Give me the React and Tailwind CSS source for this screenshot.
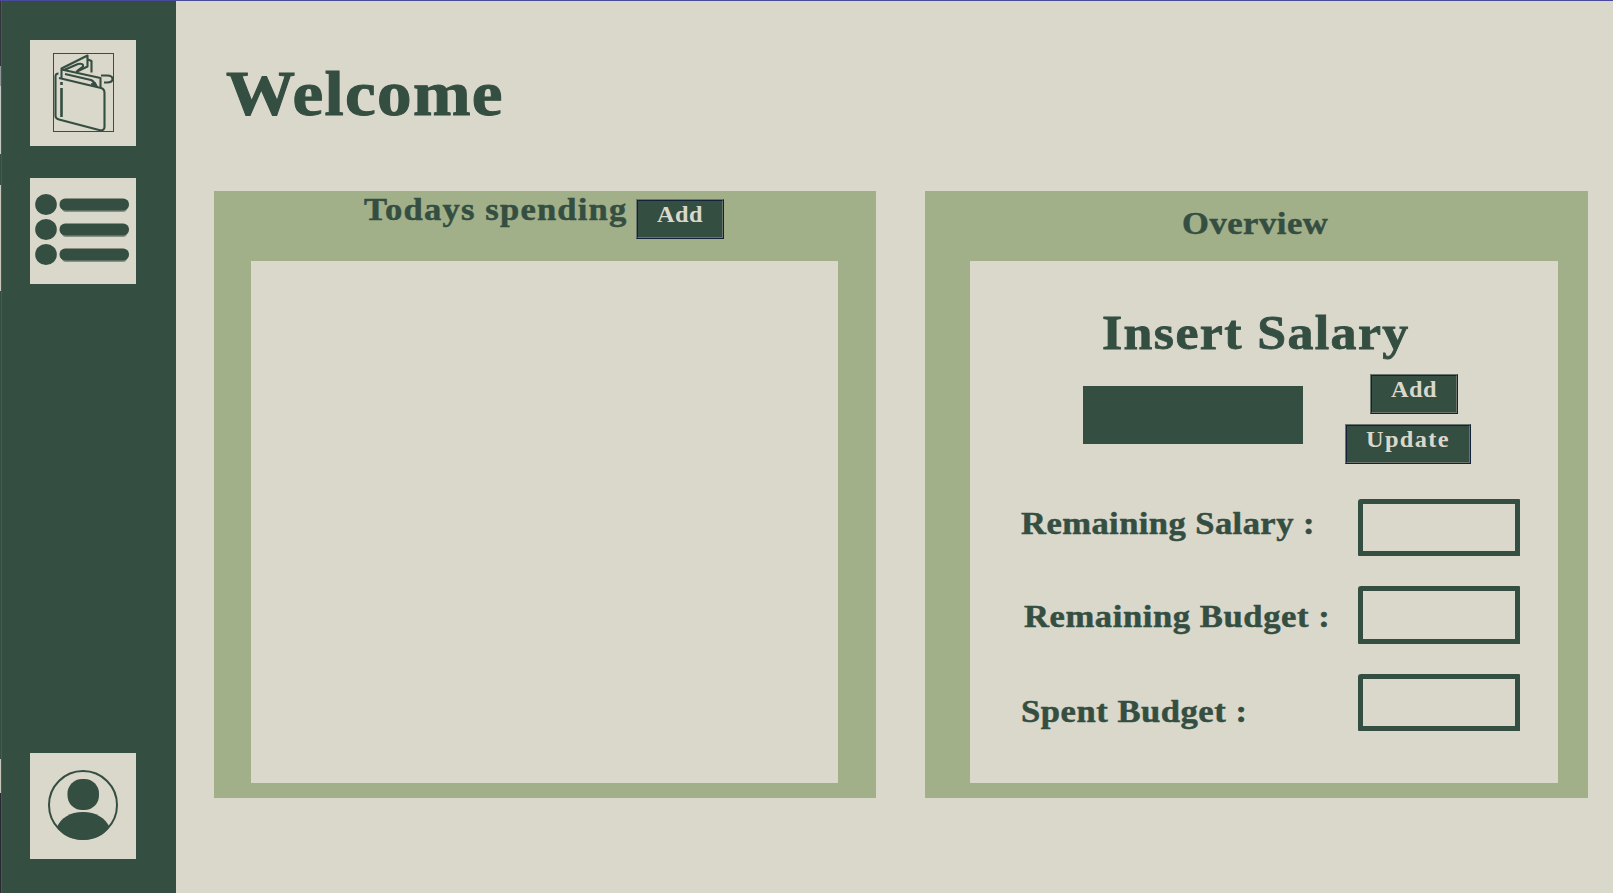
const INK = "#344e41";

function WalletIcon() {
  return (
    <svg viewBox="0 0 61 79" className="-mt-px block h-[79px] w-[61px]" fill="none" stroke={INK} strokeWidth="2.1" strokeLinejoin="round">
      <rect x="0.5" y="0.5" width="60" height="78" stroke="#444846" strokeWidth="1" strokeLinejoin="miter" />
      <path d="M5.500 20.500Q2.500 20.500 2.500 23.500V63Q2.500 65.500 6 66.500L47 77.300Q51.500 77.500 51.500 74V40Q51.500 36 48 35L6 25" />
      <path d="M8.500 25V15.500L34.500 2.500V13.500L23 19" />
      <path d="M35 6.500L38.500 8V19.500M11 17L25 11Q31 10 30 13.500L24 18M8.500 16.500L47.500 25V35M12 21L38 27Q41 28 41 31" />
      <path d="M38 31L42 29L45 34.500Z" fill={INK} strokeWidth="1" />
      <path d="M48 22.500H54Q59.500 22.500 59.500 26Q59.500 29.500 54 29.500H51" />
      <path d="M8.500 29V32M8.500 35V64" strokeWidth="2.600" />
    </svg>
  );
}

function ListIcon() {
  return (
    <svg viewBox="0 0 106 106" className="block size-[106px]" fill={INK}>
      {[26.500, 51.500, 76.500].map((y) => (
        <g key={y}>
          <rect x="32" y={y - 4} width="65" height="11.500" rx="4" opacity="0.5" />
          <ellipse cx="16" cy={y} rx="10.800" ry="10.500" />
          <rect x="29.500" y={y - 6} width="69.500" height="12" rx="5.700" />
        </g>
      ))}
    </svg>
  );
}

function UserIcon() {
  return (
    <svg viewBox="0 0 106 106" className="block size-[106px]" fill={INK}>
      <circle cx="53" cy="52" r="34" fill="none" stroke={INK} strokeWidth="2" />
      <rect x="37.500" y="26" width="31.500" height="31" rx="14.500" />
      <path d="M27 74C31 65 40 59 53 59S75 65 79.500 74C74 82 65 87 53 87S32 82 27 74Z" />
    </svg>
  );
}

function NavTile({ children }) {
  return <button className="flex size-[106px] shrink-0 items-center justify-center bg-[#dad7cb]">{children}</button>;
}

function Wide({ className = "", children }) {
  return (
    <span className={`inline-block origin-left scale-x-[1.08] whitespace-nowrap [-webkit-text-stroke:0.5px_currentColor] ${className}`}>
      {children}
    </span>
  );
}

function ActionButton({ className, children }) {
  return (
    <button className={`block h-10 shrink-0 border border-t-[#6b746f] border-r-[#14213a] border-b-[#14213a] border-l-[#6b746f] bg-[#344e41] ${className}`}>
      <span className="block h-[38px] border border-t-[#14213a] border-r-[#6b746f] border-b-[#6b746f] border-l-[#14213a] pt-0.5 pl-[19px] text-left text-[23px] leading-6 text-[#dad7cb]">
        <span className="inline-block origin-left scale-x-[1.06]">{children}</span>
      </span>
    </button>
  );
}

function Field({ className }) {
  return <div className={`w-[162px] rounded-tl-[3px] rounded-tr-[1px] rounded-bl-[1px] border-[5px] border-[#344e41] ${className}`} />;
}

export default function App() {
  return (
    <div className="flex h-[893px] w-[1613px] overflow-hidden border-t border-[#4a4a9c] bg-[#dad7cb] font-['Liberation_Serif',serif] font-bold text-[#344e41]">
      <div className="flex w-px shrink-0 flex-col">
        <div className="h-[65px] bg-[#34343c]" />
        <div className="h-[20px] bg-[#8f9699]" />
        <div className="h-[68px] bg-[#c4c8c4]" />
        <div className="h-[31px] bg-[#344e41]" />
        <div className="h-[106px] bg-[#c9c7bd]" />
        <div className="h-[468px] bg-[#344e41]" />
        <div className="h-[34px] bg-[#c9c7bd]" />
        <div className="flex-1 bg-[#2a2a32]" />
      </div>
      <aside className="flex w-[175px] shrink-0 flex-col border-l border-[#4a4a9c] bg-[#344e41] pt-[39px] pb-[34px] pl-7">
        <NavTile><WalletIcon /></NavTile>
        <div className="h-8 shrink-0" />
        <NavTile><ListIcon /></NavTile>
        <div className="flex-1" />
        <NavTile><UserIcon /></NavTile>
      </aside>
      <main className="flex-1 pl-[38px]">
        <h1 className="h-[190px] pt-[57px] pl-3 text-[64px] leading-[72px]">
          <Wide className="tracking-[1.2px] [-webkit-text-stroke:1px_currentColor]">Welcome</Wide>
        </h1>
        <div className="flex gap-[49px]">
          <section className="flex h-[607px] w-[662px] flex-col bg-[#a2b08a] pr-[38px] pb-[15px] pl-[37px]">
            <header className="flex h-[70px] shrink-0 pl-[113px]">
              <h2 className="-mt-0.5 w-[272px] shrink-0 text-[32px] leading-10">
                <Wide className="tracking-[1.1px]">Todays spending</Wide>
              </h2>
              <div className="pt-2">
                <ActionButton className="w-[88px] tracking-[0.4px]">Add</ActionButton>
              </div>
            </header>
            <div className="flex-1 bg-[#dad7cb]" />
          </section>
          <section className="flex h-[607px] w-[663px] flex-col bg-[#a2b08a] pr-[30px] pb-[15px] pl-[45px]">
            <h2 className="h-[70px] shrink-0 pt-3 pl-[212px] text-[32px] leading-10">
              <Wide className="tracking-[0.5px]">Overview</Wide>
            </h2>
            <div className="flex-1 bg-[#dad7cb]">
              <h3 className="h-[113px] pt-11 pl-[132px] text-[48px] leading-[56px]">
                <Wide className="tracking-[1.3px] [-webkit-text-stroke:0.8px_currentColor]">Insert Salary</Wide>
              </h3>
              <div className="flex h-[125px] pl-[113px]">
                <div className="mt-3 h-[58px] w-[220px] bg-[#344e41]" />
                <div className="flex flex-col gap-2.5 pl-[42px]">
                  <ActionButton className="ml-[25px] w-[88px] tracking-[0.4px]">Add</ActionButton>
                  <ActionButton className="w-[126px] pl-0 tracking-[1.25px]">Update</ActionButton>
                </div>
              </div>
              <div className="flex pl-[51px]">
                <div className="w-[337px] text-[32px] leading-10">
                  <p className="h-[93px] pt-1"><Wide className="tracking-[0.4px]">Remaining Salary :</Wide></p>
                  <p className="h-[95px] pt-1 pl-[3px]"><Wide className="tracking-[0.55px]">Remaining Budget :</Wide></p>
                  <p className="pt-1"><Wide className="tracking-[0.5px]">Spent Budget :</Wide></p>
                </div>
                <div className="flex flex-col">
                  <Field className="h-[57px]" />
                  <Field className="mt-[30px] h-[58px]" />
                  <Field className="mt-[30px] h-[57px]" />
                </div>
              </div>
            </div>
          </section>
        </div>
      </main>
    </div>
  );
}
